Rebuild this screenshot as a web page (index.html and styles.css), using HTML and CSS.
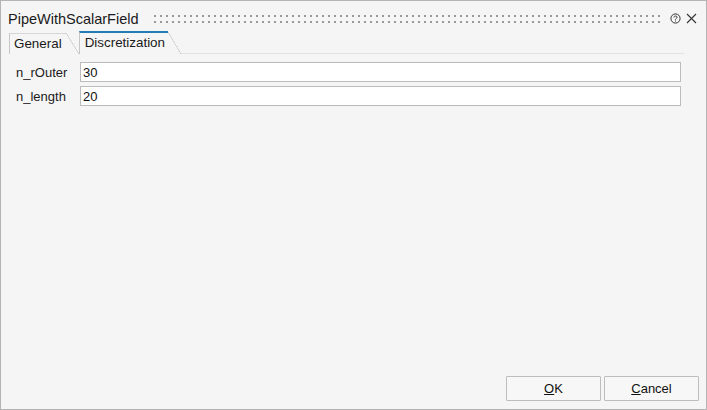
FILE: index.html
```html
<!DOCTYPE html>
<html lang="en-US">
<head>
<meta charset="UTF-8">
<title>PipeWithScalarField</title>
<link rel="stylesheet" href="styles.css">
</head>

<body>
<div class="dialog">
	<div class="titlebar">
		<span class="title">PipeWithScalarField</span>
		<div class="grip"></div>
		<span class="icon icon--help">
			<svg width="11" height="11" viewBox="0 0 11 11">
				<circle cx="5.5" cy="5.5" r="4.6" fill="none" stroke="#333" stroke-width="1"/>
				<path d="M3.9 4.4 C3.9 2.6 7.1 2.6 7.1 4.3 C7.1 5.4 5.5 5.4 5.5 6.6" fill="none" stroke="#333" stroke-width="1"/>
				<rect x="5" y="7.5" width="1" height="1" fill="#333"/>
			</svg>
		</span>
		<span class="icon icon--close">
			<svg width="11" height="11" viewBox="0 0 11 11">
				<path d="M1 1 L10 10 M10 1 L1 10" stroke="#333" stroke-width="1.1"/>
			</svg>
		</span>
	</div>

	<div class="tabs">
		<div class="tab">General</div>
		<div class="tab tab--active">Discretization</div>
		<div class="tabs-rest"></div>
	</div>

	<div class="form">
		<label class="form-label">n_rOuter</label>
		<input class="form-input" type="text" value="30">
		<label class="form-label">n_length</label>
		<input class="form-input" type="text" value="20">
	</div>

	<div class="buttons">
		<button class="btn"><u>O</u>K</button>
		<button class="btn"><u>C</u>ancel</button>
	</div>
</div>
</body>
</html>
```

FILE: styles.css
```css
* {
	box-sizing: border-box;
}

body {
	margin: 0;
	font-family: "Liberation Sans", Arial, sans-serif;
	color: #1a1a1a;
	background: #f5f5f5;
}

.dialog {
	height: 410px;
	border: 1px solid #b4b4b4;
	background: #f5f5f5;
	display: flex;
	flex-direction: column;
}

/* title bar */

.titlebar {
	display: flex;
	align-items: center;
	padding: 8px 9px 0 7px;
}

.title {
	font-size: 14.5px;
	line-height: 20px;
}

.grip {
	flex: 1;
	height: 8px;
	margin: 0 9px 0 15px;
	background:
		repeating-linear-gradient(90deg, #999 0 2px, transparent 2px 6px) left top / 100% 2px no-repeat,
		repeating-linear-gradient(90deg, #999 0 2px, transparent 2px 6px) left bottom / 100% 2px no-repeat;
}

.icon {
	display: flex;
	width: 11px;
	height: 11px;
	margin-top: -1px;
}

.icon--help {
	margin-right: 5px;
}

/* tabs */

.tabs {
	display: flex;
	align-items: flex-end;
	margin-top: 2px;
	padding-left: 8px;
}

.tab {
	position: relative;
	font-size: 13.4px;
	line-height: 19px;
	padding: 0 4px 1px 4px;
	margin-right: 13px;
	border-left: 1px solid #c6c6c6;
	border-top: 1px solid #d6d6d6;
}

.tab::after {
	content: "";
	position: absolute;
	left: 100%;
	top: -1px;
	bottom: 0;
	width: 13px;
	background: linear-gradient(to top right, transparent calc(50% - 0.6px), #c4c4c4 50%, transparent calc(50% + 0.6px));
}

.tab--active {
	padding: 0 3px 2px 5px;
	border-top: 2px solid #1f7db4;
}

.tabs-rest {
	flex: 1;
	margin-left: -1px;
	margin-right: 22px;
	border-bottom: 1px solid #e2e2e2;
}

/* form */

.form {
	display: grid;
	grid-template-columns: 64px 1fr;
	row-gap: 4px;
	padding: 8px 25px 0 15px;
}

.form-label {
	font-size: 13px;
	line-height: 19px;
	padding-top: 1px;
}

.form-input {
	height: 20px;
	margin: 0;
	padding: 0 2px;
	border: 1px solid #bcbcbc;
	border-radius: 0;
	background: #fff;
	font-family: inherit;
	font-size: 13px;
	color: #111;
	outline: none;
}

/* buttons */

.buttons {
	margin-top: auto;
	display: flex;
	justify-content: flex-end;
	gap: 3px;
	padding: 0 7px 8px 0;
}

.btn {
	width: 95px;
	height: 25px;
	border: 1px solid #bdbdbd;
	border-radius: 1px;
	background: #f7f7f7;
	font-family: inherit;
	font-size: 13px;
	color: #111;
	padding: 0;
}
```
